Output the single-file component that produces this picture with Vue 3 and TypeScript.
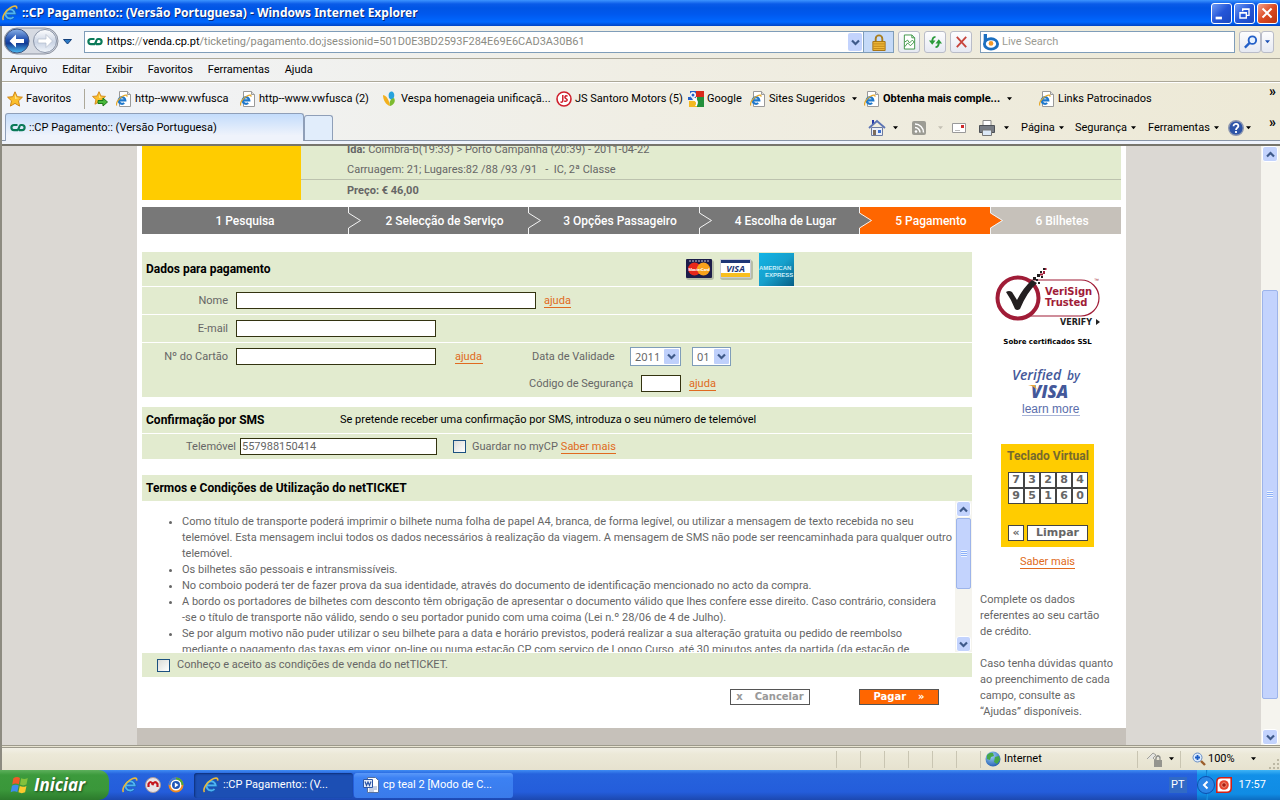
<script setup lang="ts">
import { ref } from 'vue'

interface Favourite {
  label: string
  icon: string
  menu?: boolean
  strong?: boolean
}

const menus: string[] = ['Arquivo', 'Editar', 'Exibir', 'Favoritos', 'Ferramentas', 'Ajuda']

const favourites: Favourite[] = [
  { label: 'http--www.vwfusca', icon: 'page' },
  { label: 'http--www.vwfusca (2)', icon: 'page' },
  { label: 'Vespa homenageia unificaçã...', icon: 'vespa' },
  { label: 'JS Santoro Motors (5)', icon: 'js' },
  { label: 'Google', icon: 'google' },
  { label: 'Sites Sugeridos', icon: 'page', menu: true },
  { label: 'Obtenha mais comple...', icon: 'page', menu: true, strong: true },
  { label: 'Links Patrocinados', icon: 'page' },
]

const steps: string[] = [
  '1 Pesquisa',
  '2 Selecção de Serviço',
  '3 Opções Passageiro',
  '4 Escolha de Lugar',
  '5 Pagamento',
  '6 Bilhetes',
]
const currentStep = 4

const terms: string[] = [
  'Como título de transporte poderá imprimir o bilhete numa folha de papel A4, branca, de forma legível, ou utilizar a mensagem de texto recebida no seu\ntelemóvel. Esta mensagem inclui todos os dados necessários à realização da viagem. A mensagem de SMS não pode ser reencaminhada para qualquer outro\ntelemóvel.',
  'Os bilhetes são pessoais e intransmissíveis.',
  'No comboio poderá ter de fazer prova da sua identidade, através do documento de identificação mencionado no acto da compra.',
  'A bordo os portadores de bilhetes com desconto têm obrigação de apresentar o documento válido que lhes confere esse direito. Caso contrário, considera\n-se o título de transporte não válido, sendo o seu portador punido com uma coima (Lei n.º 28/06 de 4 de Julho).',
  'Se por algum motivo não puder utilizar o seu bilhete para a data e horário previstos, poderá realizar a sua alteração gratuita ou pedido de reembolso\nmediante o pagamento das taxas em vigor, on-line ou numa estação CP com serviço de Longo Curso, até 30 minutos antes da partida (da estação de',
]

const keys: string[] = ['7', '3', '2', '8', '4', '9', '5', '1', '6', '0']

const name = ref('')
const email = ref('')
const card = ref('')
const code = ref('')
const year = ref('2011')
const month = ref('01')
const phone = ref('557988150414')
const saveCard = ref(false)
const accepted = ref(false)
const search = ref('')

function press(key: string): void {
  card.value += key
}
function eraseLast(): void {
  card.value = card.value.slice(0, -1)
}
function clearCard(): void {
  card.value = ''
}
</script>

<template>
  <div class="desktop">
    <svg class="symbols" aria-hidden="true">
      <defs>
        <linearGradient id="g-back" x1="0" y1="0" x2="0" y2="1">
          <stop offset="0" stop-color="#8fb4e8" /><stop offset=".45" stop-color="#1f4fb0" /><stop offset=".6" stop-color="#123c96" /><stop offset="1" stop-color="#4fc0f5" />
        </linearGradient>
        <linearGradient id="g-fwd" x1="0" y1="0" x2="0" y2="1">
          <stop offset="0" stop-color="#ffffff" /><stop offset=".55" stop-color="#c9d3e4" /><stop offset="1" stop-color="#f2f6fb" />
        </linearGradient>
        <linearGradient id="g-amex" x1="0" y1="0" x2="1" y2="1">
          <stop offset="0" stop-color="#12b4e6" /><stop offset=".5" stop-color="#16a0cc" /><stop offset="1" stop-color="#075f86" />
        </linearGradient>
        <radialGradient id="g-globe" cx=".4" cy=".3" r=".8">
          <stop offset="0" stop-color="#9fd2f7" /><stop offset="1" stop-color="#1a55ad" />
        </radialGradient>
      </defs>
      <symbol id="i-ie" viewBox="0 0 16 16">
        <path d="M4 8.400h8.700A4.600 4.600 0 1 0 11.500 12" fill="none" stroke="#1763b5" stroke-width="3.200" />
        <path d="M4 8.400h8.700A4.600 4.600 0 1 0 11.500 12" fill="none" stroke="#4fb4f2" stroke-width="1.800" />
        <path d="M1.500 15C-.6 12.400 3.500 5.600 8.500 2.600C12 .5 15.400.4 14.600 3.600" fill="none" stroke="#e9b93c" stroke-width="1.600" />
      </symbol>
      <symbol id="i-page" viewBox="0 0 16 16">
        <path d="M3.500.5h8l3 3v12h-11z" fill="#fff" stroke="#9a9a9a" />
        <path d="M11.500.5v3h3" fill="#ddd" stroke="#9a9a9a" />
        <path d="M3 9.400h6.300A3.300 3.300 0 1 0 8.200 12" fill="none" stroke="#1e78cc" stroke-width="2.200" />
        <path d="M.8 14.600C-.5 12 3 7 7 5c3-1.400 4.500-1 3.800.8" fill="none" stroke="#e5a92c" stroke-width="1.200" />
      </symbol>
      <symbol id="i-vespa" viewBox="0 0 16 16">
        <path d="M1 4c4 1 6 5 7 11C4 14 1 9 1 4z" fill="#f3b01d" />
        <path d="M7 7c-1-4 0-6.500 3-6.500 3 1 3 6 0 9z" fill="#27a3dd" />
        <path d="M8 15c-1-4 0-7 4-8 2 3 0 7-4 8z" fill="#7dbb2f" />
      </symbol>
      <symbol id="i-js" viewBox="0 0 16 16">
        <circle cx="8" cy="8" r="7" fill="#fff" stroke="#cf1f2c" stroke-width="1.600" />
        <path d="M6.800 4v5.500q0 2-2.300 1.600M11.500 5.200C9 4 8 6.600 10 7.600s1.500 3.400-1.800 2.400" fill="none" stroke="#cf1f2c" stroke-width="1.500" />
      </symbol>
      <symbol id="i-google" viewBox="0 0 16 16">
        <path d="M2 0h6v7H2z" fill="#2460c8" /><path d="M8 0h8v6H8z" fill="#d92a1c" />
        <path d="M9 6h7v10H9z" fill="#24903b" /><path d="M1 10h8v6H1z" fill="#f4b921" />
        <path d="M0 6h3l2 3H0z" fill="#2460c8" />
        <circle cx="5" cy="4" r="3" fill="#fff" /><circle cx="5" cy="4" r="1.500" fill="#2460c8" />
        <path d="M6 7q6 2 3 8H7q3-4-2-6z" fill="#fff" />
      </symbol>
      <symbol id="i-star" viewBox="0 0 16 16">
        <path d="M8 .8l2.200 4.900 5.200.5-3.900 3.600 1.100 5.300L8 12.400l-4.600 2.700 1.100-5.300L.6 6.200l5.200-.5z" fill="#fbbf2c" stroke="#cf8413" />
        <path d="M8 3l1.300 3.500 3 .4L8 8z" fill="#ffe58a" />
      </symbol>
      <symbol id="i-cp" viewBox="0 0 16 10">
        <path d="M7.500 2H4a2.600 2.600 0 0 0 0 5.200h3C9.500 7.200 8.500 2 11 2h1a2.600 2.600 0 0 1 0 5.200H9" fill="none" stroke="#0b7a58" stroke-width="2.200" />
      </symbol>
      <symbol id="i-down" viewBox="0 0 9 7">
        <path d="M1 1.500l3.500 3.500L8 1.500" fill="none" stroke="#3f5a8a" stroke-width="2.200" />
      </symbol>
      <symbol id="i-caret" viewBox="0 0 6 4"><path d="M0 0h6L3 3.500z" fill="currentColor" /></symbol>
      <symbol id="i-winflag" viewBox="0 0 18 18">
        <path d="M3 3q3-2 6-.4L8 8.400q-3-1.400-6 .2z" fill="#ef5a2a" />
        <path d="M10 3q3 1.400 6-.2l-1.200 5.800q-3 1.500-5.800 0z" fill="#82c13c" />
        <path d="M1.800 9.700q3-1.700 6-.2l-1.200 5.800q-3-1.500-6 .2z" fill="#3e8ded" />
        <path d="M8.800 9.900q3 1.500 6-.1l-1.200 5.800q-3 1.500-6 0z" fill="#fbc92e" />
      </symbol>
    </svg>

    <header class="titlebar">
      <svg class="i16"><use href="#i-ie" /></svg>
      <h1>::CP Pagamento:: (Versão Portuguesa) - Windows Internet Explorer</h1>
      <div class="winbuttons">
        <button type="button" aria-label="Minimizar"><svg viewBox="0 0 21 21"><path d="M4 14h7v3H4z" fill="#fff" /></svg></button>
        <button type="button" aria-label="Restaurar"><svg viewBox="0 0 21 21"><path d="M8.500 8V5.500h7v7H13M8 6h8M5.500 9.500h7v6h-7zM5 10h8" fill="none" stroke="#fff" stroke-width="1.500" /></svg></button>
        <button type="button" class="close" aria-label="Fechar"><svg viewBox="0 0 21 21"><path d="M5 5l10 10M15 5l-10 10" stroke="#fff" stroke-width="2.200" /></svg></button>
      </div>
    </header>

    <div class="window">
      <div class="chrome">
        <div class="navbar">
          <svg class="travel" viewBox="0 0 56 30" role="img" aria-label="Voltar e avançar">
            <path d="M13 1h28a13 13 0 0 1 0 26H13a13 13 0 0 1 0-26z" fill="#d6dae2" stroke="#8d93a0" />
            <circle cx="13" cy="14" r="12" fill="url(#g-back)" stroke="#3d5480" />
            <path d="M5.500 14l6.500-6.500v4.500h8v4h-8v4.500z" fill="#fff" />
            <circle cx="41" cy="14" r="11.500" fill="url(#g-fwd)" stroke="#8b95a8" />
            <path d="M48.500 14L42 7.500V12h-8v4h8v4.500z" fill="#fff" stroke="#b3bccb" stroke-width=".7" />
          </svg>
          <svg class="history" viewBox="0 0 9 6"><path d="M.5.5h8L4.500 5z" fill="#2a78c4" stroke="#14407c" /></svg>
          <div class="address">
            <svg class="cp"><use href="#i-cp" /></svg>
            <span class="url"><b>https:</b>//<b>venda.cp.pt</b>/ticketing/pagamento.do;jsessionid=501D0E3BD2593F284E69E6CAD3A30B61</span>
            <button type="button" class="drop" aria-label="Endereços"><svg><use href="#i-down" /></svg></button>
          </div>
          <div class="lock"><svg viewBox="0 0 14 18"><path d="M3.500 9V5a3.500 3.500 0 0 1 7 0v4" fill="none" stroke="#a87d1c" stroke-width="2" /><path d="M.5 8h13v9.500H.5z" fill="#f0b93a" stroke="#a36f10" /><path d="M1 10.500h12M1 13h12M1 15.500h12" stroke="#bf8418" /></svg></div>
          <button type="button" class="tool" aria-label="Compatibilidade"><svg viewBox="0 0 16 16"><path d="M2.500.5h8l3 3v12h-11z" fill="#fff" stroke="#3b9443" /><path d="M10.500.5v3h3M3 8l3-2 2 3 3-3 2 2M3 13l3-4 3 3 4-4" fill="none" stroke="#3b9443" /></svg></button>
          <button type="button" class="tool" aria-label="Atualizar"><svg viewBox="0 0 16 16"><path d="M8 2.500Q4.500 2.500 4.500 8M8 13.500q3.500 0 3.500-5.500" fill="none" stroke="#2a9a3a" stroke-width="2" /><path d="M1 6.500h7L4.500 11zM8 9.500h7L11.500 5z" fill="#2a9a3a" /></svg></button>
          <button type="button" class="tool" aria-label="Parar"><svg viewBox="0 0 16 16"><path d="M3 2.500l10 11M13 2.500l-10 11" stroke="#c8443c" stroke-width="2" /></svg></button>
          <label class="search">
            <svg viewBox="0 0 18 18"><path d="M3 0v9" stroke="#1b6fc0" stroke-width="3.500" /><ellipse cx="9" cy="10.500" rx="7" ry="5.500" fill="#fff" stroke="#1b6fc0" stroke-width="3" /><circle cx="9" cy="10" r="2.500" fill="#f2992a" /></svg>
            <input v-model="search" type="text" placeholder="Live Search" aria-label="Live Search" />
          </label>
          <div class="go">
            <button type="button" aria-label="Pesquisar"><svg viewBox="0 0 16 16"><circle cx="10" cy="6" r="4" fill="#e6f1ff" stroke="#2460c8" stroke-width="2" /><path d="M7 9l-5 5" stroke="#2460c8" stroke-width="2.500" /></svg></button>
            <button type="button" class="more" aria-label="Opções de pesquisa"><svg class="caret blue"><use href="#i-caret" /></svg></button>
          </div>
        </div>

        <nav class="menubar">
          <a v-for="item in menus" :key="item" href="#">{{ item }}</a>
        </nav>

        <div class="favbar">
          <a href="#" class="favhome"><svg class="i16"><use href="#i-star" /></svg>Favoritos</a>
          <button type="button" class="favadd" aria-label="Adicionar a Favoritos">
            <svg class="i16" viewBox="0 0 16 16"><use href="#i-star" width="14" height="14" /><path d="M6 9.500h5V7l4.500 4-4.500 4v-2.500H6z" fill="#48b83c" stroke="#1d7a1a" /></svg>
          </button>
          <div class="favlist">
            <a v-for="fav in favourites" :key="fav.label" href="#" :class="{ strong: fav.strong }">
              <svg class="i16"><use :href="'#i-' + fav.icon" /></svg>{{ fav.label }}<svg v-if="fav.menu" class="caret"><use href="#i-caret" /></svg>
            </a>
          </div>
          <span class="overflow">»</span>
        </div>

        <div class="tabbar">
          <a href="#" class="tab"><svg class="cp"><use href="#i-cp" /></svg>::CP Pagamento:: (Versão Portuguesa)</a>
          <button type="button" class="newtab" aria-label="Nova guia"></button>
          <div class="commands">
            <a href="#" class="cmd home" aria-label="Página inicial"><svg class="i18" viewBox="0 0 18 18"><path d="M4 1h2v4H4z" fill="#2438a8" /><path d="M3.500 8.500h11v8h-11z" fill="#e9eef8" stroke="#6d7ba0" /><path d="M1 9l8-7 8 7" fill="none" stroke="#5c74b4" stroke-width="1.800" /><path d="M5 11h3v5H5z" fill="#7d6c5c" /><path d="M10 11h3v3h-3z" fill="#3c6fcf" /></svg><svg class="caret"><use href="#i-caret" /></svg></a>
            <a href="#" class="cmd feed" aria-label="Feeds"><svg class="i14" viewBox="0 0 14 14"><rect width="14" height="14" rx="2" fill="#9c9c94" /><circle cx="4" cy="10.500" r="1.300" fill="#fff" /><path d="M3 6.500a5 5 0 0 1 5 5M3 3a8.500 8.500 0 0 1 8.500 8.500" fill="none" stroke="#fff" stroke-width="1.500" /></svg><svg class="caret dim"><use href="#i-caret" /></svg></a>
            <a href="#" class="cmd mail" aria-label="Ler email"><svg class="i14" viewBox="0 0 14 14"><path d="M.5 2.500h13v9H.5z" fill="#fff" stroke="#999" /><path d="M9 4h3v3H9z" fill="#cf2a2a" /><path d="M3 9.500h5" stroke="#bbb" /></svg></a>
            <a href="#" class="cmd print" aria-label="Imprimir"><svg class="i16" viewBox="0 0 16 16"><path d="M4 .5h8v6H4z" fill="#fff" stroke="#888" /><path d="M.5 5.500h15v7H.5z" fill="#777c84" stroke="#4d5157" /><path d="M3.500 10h9v5.500h-9z" fill="#dce9f7" stroke="#777" /></svg><svg class="caret"><use href="#i-caret" /></svg></a>
            <a href="#" class="cmd pagina">Página<svg class="caret"><use href="#i-caret" /></svg></a>
            <a href="#" class="cmd seguranca">Segurança<svg class="caret"><use href="#i-caret" /></svg></a>
            <a href="#" class="cmd ferramentas">Ferramentas<svg class="caret"><use href="#i-caret" /></svg></a>
            <a href="#" class="cmd help" aria-label="Ajuda"><svg class="i16" viewBox="0 0 16 16"><circle cx="8" cy="8" r="7.300" fill="#2e55a8" stroke="#8d97b0" stroke-width="1.400" /><path d="M5.500 6.200C5.700 2.800 11 3.400 10.300 6.500 10 7.800 8 8 8 10M8 11v2" fill="none" stroke="#fff" stroke-width="1.800" /></svg><svg class="caret"><use href="#i-caret" /></svg></a>
          </div>
          <span class="overflow">»</span>
        </div>
      </div>

      <div class="viewport">
        <div class="page">
          <main class="sheet">
            <section class="journey">
              <div class="swatch"></div>
              <div class="trip">
                <p><b>Ida:</b> Coimbra-b(19:33) &gt; Porto Campanha (20:39) - 2011-04-22</p>
                <p>Carruagem: 21; Lugares:82 /88 /93 /91 &nbsp; - &nbsp;IC, 2ª Classe</p>
                <p class="price">Preço: € 46,00</p>
              </div>
            </section>

            <ol class="steps">
              <li v-for="(step, i) in steps" :key="step" :class="{ current: i === currentStep, next: i > currentStep }">
                <svg v-if="i > 0" viewBox="0 0 13 27" :class="{ lit: i === currentStep + 1 }"><path class="tip" d="M0 0v6l12 7.500L0 21v6z" /><path d="M.5 0v6l12 7.500L.5 21v6" fill="none" stroke="#f4f4f4" /></svg>
                <span>{{ step }}</span>
              </li>
            </ol>

            <div class="columns">
              <form class="payment" @submit.prevent>
                <section class="panel">
                  <div class="line head">
                    <h2>Dados para pagamento</h2>
                    <div class="cards">
                      <svg class="card" viewBox="0 0 34 26" role="img" aria-label="MasterCard"><rect x="2" y="4" width="28" height="20" rx="3" fill="#8a9180" opacity=".5" /><rect x="2" y="3" width="26" height="19" rx="1" fill="#1c1d4a" /><path d="M5 5h21" stroke="#c9cbdc" stroke-dasharray="2 1" /><circle cx="10.500" cy="13" r="6.500" fill="#e8271b" /><circle cx="19.500" cy="13" r="6.500" fill="#f9a21b" /><text x="15" y="15" text-anchor="middle" class="mc">MasterCard</text></svg>
                      <svg class="card" viewBox="0 0 34 26" role="img" aria-label="Visa"><rect x="0" y="4" width="33" height="20" rx="3" fill="#8a9180" opacity=".5" /><rect x=".5" y="3.500" width="30" height="18" fill="#fff" stroke="#c8cbd4" /><path d="M1 4h29v3H1z" fill="#1d3576" /><path d="M1 17h29v4H1z" fill="#f8bf1f" /><text x="15.500" y="15.500" text-anchor="middle" class="visa">VISA</text></svg>
                      <svg class="amex" viewBox="0 0 35 33" role="img" aria-label="American Express"><path d="M0 0h35v33H0z" fill="url(#g-amex)" /><text x="0" y="17" class="ax">AMERICAN</text><text x="6" y="24" class="ax">EXPRESS</text></svg>
                    </div>
                  </div>
                  <div class="line">
                    <label class="caption" for="nome">Nome</label>
                    <input id="nome" v-model="name" class="field wide" type="text" />
                    <a href="#" class="help-link">ajuda</a>
                  </div>
                  <div class="line">
                    <label class="caption" for="email">E-mail</label>
                    <input id="email" v-model="email" class="field" type="text" />
                  </div>
                  <div class="line bare">
                    <label class="caption" for="cartao">Nº do Cartão</label>
                    <input id="cartao" v-model="card" class="field" type="text" />
                    <a href="#" class="help-link far">ajuda</a>
                    <label class="validity" for="ano">Data de Validade</label>
                    <span class="picker">
                      <select id="ano" v-model="year"><option>2011</option><option>2012</option><option>2013</option></select>
                      <svg><use href="#i-down" /></svg>
                    </span>
                    <span class="picker month">
                      <select v-model="month" aria-label="Mês"><option>01</option><option>02</option><option>03</option></select>
                      <svg><use href="#i-down" /></svg>
                    </span>
                  </div>
                  <div class="line bare">
                    <label class="security" for="codigo">Código de Segurança</label>
                    <input id="codigo" v-model="code" class="field tiny" type="text" />
                    <a href="#" class="help-link">ajuda</a>
                  </div>
                </section>

                <section class="panel sms">
                  <div class="line short">
                    <h2 class="sms-title">Confirmação por SMS</h2>
                    <p>Se pretende receber uma confirmação por SMS, introduza o seu número de telemóvel</p>
                  </div>
                  <div class="line phone">
                    <label class="caption" for="telemovel">Telemóvel</label>
                    <input id="telemovel" v-model="phone" class="field" type="text" />
                    <input id="guardar" v-model="saveCard" class="tick" type="checkbox" />
                    <label for="guardar">Guardar no myCP</label>
                    <a href="#" class="inline-link">Saber mais</a>
                  </div>
                </section>

                <section class="terms">
                  <h2>Termos e Condições de Utilização do netTICKET</h2>
                  <div class="termbox">
                    <ul><li v-for="term in terms" :key="term">{{ term }}</li></ul>
                    <div class="scroll small">
                      <button type="button" aria-label="Subir"><svg class="flip"><use href="#i-down" /></svg></button>
                      <div class="thumb"><i></i></div>
                      <div class="after"></div>
                      <button type="button" aria-label="Descer"><svg><use href="#i-down" /></svg></button>
                    </div>
                  </div>
                  <div class="accept">
                    <input id="aceito" v-model="accepted" class="tick" type="checkbox" />
                    <label for="aceito">Conheço e aceito as condições de venda do netTICKET.</label>
                  </div>
                </section>

                <div class="actions">
                  <button type="button" class="cancel"><span>x</span><span>Cancelar</span></button>
                  <button type="submit" class="pay"><span>Pagar</span><span>»</span></button>
                </div>
              </form>

              <aside class="side">
                <svg class="verisign" viewBox="0 0 110 64" role="img" aria-label="VeriSign Trusted">
                  <path d="M36 16h52a18 18 0 0 1 0 36H38" fill="none" stroke="#a01c37" stroke-width="1.200" />
                  <circle cx="25" cy="34" r="20.500" fill="#fff" stroke="#a01c37" stroke-width="4" />
                  <path d="M13 28q3-2 6 0l5 8q6-12 15-20l5 3q-10 9-17 26-3 2-5 0-4-10-9-17z" fill="#231f20" />
                  <path d="M40 13h3v3h-3zM44 10h3v3h-3zM43 15h2v2h-2zM47 7h2v2h-2zM50 4h3v2h-3zM48 12h2v2h-2zM45 18h2v2h-2z" fill="#231f20" />
                  <path d="M47 9.500h3v2h-3zM50 7h2v3h-2zM52 4h1.500v2H52z" fill="#a01c37" />
                  <text x="52" y="31" class="vs">VeriSign</text>
                  <text x="52" y="42" class="vs">Trusted</text>
                  <text x="101" y="18" class="tm">™</text>
                  <text x="67" y="61" class="vf">VERIFY</text>
                  <path d="M103 55l4 3-4 3z" fill="#222" />
                </svg>
                <a href="#" class="ssl">Sobre certificados SSL</a>
                <svg class="vbv" viewBox="0 0 72 52" role="img" aria-label="Verified by VISA">
                  <text x="0" y="13" class="vb">Verified</text><text x="55" y="13" class="vb by">by</text>
                  <text x="19" y="31" class="vb big">VISA</text>
                  <path d="M16 18h7l2 5q-3-4-9-5z" fill="#e9a93c" />
                  <text x="10" y="46" class="lm">learn more</text>
                  <path d="M10 48.500h58" stroke="#a9b5d8" />
                </svg>
                <div class="keypad">
                  <h3>Teclado Virtual</h3>
                  <div class="keys"><button v-for="key in keys" :key="key" type="button" @click="press(key)">{{ key }}</button></div>
                  <div class="edit"><button type="button" @click="eraseLast">«</button><button type="button" @click="clearCard">Limpar</button></div>
                </div>
                <a href="#" class="inline-link more-link">Saber mais</a>
                <p>Complete os dados<br />referentes ao seu cartão<br />de crédito.</p>
                <p>Caso tenha dúvidas quanto<br />ao preenchimento de cada<br />campo, consulte as<br />“Ajudas” disponíveis.</p>
              </aside>
            </div>
          </main>
          <footer class="pagefoot"></footer>
        </div>
        <div class="scroll big">
          <button type="button" aria-label="Subir"><svg class="flip"><use href="#i-down" /></svg></button>
          <div class="before"></div>
          <div class="thumb"><i></i></div>
          <div class="after"></div>
          <button type="button" aria-label="Descer"><svg><use href="#i-down" /></svg></button>
        </div>
      </div>

      <footer class="status">
        <div class="cells"><i v-for="n in 6" :key="n"></i></div>
        <div class="zone"><svg class="i16" viewBox="0 0 16 16"><circle cx="8" cy="8" r="7.500" fill="url(#g-globe)" /><path d="M2 4q3-3 6-2l1 3-3 1-1 3-3-1zM10 6l4-1 1 4-3 4-3-2z" fill="#46a848" /></svg>Internet</div>
        <div class="shield"><svg class="i18" viewBox="0 0 18 18"><path d="M1 9l6-6 3 2-3 3 2 2 3-5 2 3" fill="#e4e4e0" stroke="#a0a09a" /><path d="M8 10h8v7H8z" fill="#94948e" /><path d="M10 10V8a2 2 0 0 1 4 0v2" fill="none" stroke="#94948e" stroke-width="1.300" /></svg><svg class="caret"><use href="#i-caret" /></svg></div>
        <div class="zoomer"><svg class="i14" viewBox="0 0 14 14"><circle cx="5.500" cy="5.500" r="4.500" fill="#dbeafc" stroke="#6b8fc4" /><path d="M5.500 3v5M3 5.500h5" stroke="#1b5cc4" stroke-width="1.800" /><path d="M9 9l4 4" stroke="#9b5d2c" stroke-width="2.400" /></svg>100%<svg class="caret"><use href="#i-caret" /></svg></div>
        <svg class="grip" viewBox="0 0 12 12"><path d="M9 1h2v2H9zM9 5h2v2H9zM9 9h2v2H9zM5 5h2v2H5zM5 9h2v2H5zM1 9h2v2H1z" fill="#bcb8a4" /></svg>
      </footer>
    </div>

    <footer class="taskbar">
      <button type="button" class="start"><svg viewBox="0 0 18 18"><use href="#i-winflag" /></svg>Iniciar</button>
      <div class="quick">
        <svg class="i16"><use href="#i-ie" /></svg>
        <svg class="i16" viewBox="0 0 16 16"><circle cx="8" cy="8" r="7.500" fill="#e9e4e8" stroke="#a99" /><path d="M3.500 10V7q2-4 4 0v1q2-5 5-1v3" fill="none" stroke="#c4161f" stroke-width="2.200" /></svg>
        <svg class="i16" viewBox="0 0 16 16"><circle cx="8" cy="8" r="6.500" fill="#fff" stroke="#ee8a24" stroke-width="2" /><path d="M8 1.500A6.500 6.500 0 0 1 14.500 8" fill="none" stroke="#4aa83a" stroke-width="2" /><path d="M8 1.500A6.500 6.500 0 0 0 1.500 8" fill="none" stroke="#3a7ce0" stroke-width="2" /><circle cx="8" cy="8" r="4" fill="#1f56b8" /><path d="M6.800 5.500L10.500 8l-3.700 2.500z" fill="#fff" /></svg>
      </div>
      <button type="button" class="task active"><svg class="i16"><use href="#i-ie" /></svg>::CP Pagamento:: (V...</button>
      <button type="button" class="task"><svg class="i16" viewBox="0 0 16 16"><path d="M4.500.5h8l3 3v12h-11z" fill="#fff" stroke="#58719c" /><path d="M6 10h8M6 12h8M6 14h5" stroke="#8ba0c8" /><path d="M.5 2.500h9v8h-9z" fill="#e6eefb" stroke="#2d56a5" /><path d="M2 4.500l1.500 4L5 5l1.500 3.500 1.500-4" fill="none" stroke="#2d56a5" stroke-width="1.200" /></svg>cp teal 2 [Modo de C...</button>
      <span class="lang">PT</span>
      <div class="tray">
        <svg class="hide" viewBox="0 0 18 18"><circle cx="9" cy="9" r="8.500" fill="#2a86e6" stroke="#0d4fae" /><path d="M10.500 5.500L7 9l3.500 3.500" fill="none" stroke="#fff" stroke-width="2" /></svg>
        <svg class="i16" viewBox="0 0 16 16"><path d="M5 .8h10.200V11q0 4.200-4.200 4.200H.8V5Q.8.8 5 .8z" fill="#fff" stroke="#d32014" stroke-width="1.600" /><circle cx="8" cy="8" r="4.800" fill="#e5452c" /><circle cx="8" cy="8" r="2.300" fill="#a81d10" stroke="#ffb59a" stroke-width=".7" /></svg>
        <time>17:57</time>
      </div>
    </footer>
  </div>
</template>

<style>
body {
  margin: 0;
}
</style>

<style scoped>
* {
  box-sizing: border-box;
}
.desktop {
  --ui: Roboto, 'Liberation Sans', sans-serif;
  --text: Roboto, 'Noto Sans', sans-serif;
  display: flex;
  flex-direction: column;
  height: 100vh;
  overflow: hidden;
  font: 11px/16px var(--ui);
  color: #000;
  background: #ece9d8;
}
h1, h2, h3, p, ul, ol {
  margin: 0;
  padding: 0;
}
a {
  color: inherit;
  text-decoration: none;
}
button {
  font: inherit;
  color: inherit;
  margin: 0;
  padding: 0;
  border: 0;
  background: none;
}
label { white-space: nowrap; }
svg {
  display: block;
  flex: none;
}
.symbols {
  position: absolute;
  width: 0;
  height: 0;
}
.i14 { width: 14px; height: 14px; }
.i16 { width: 16px; height: 16px; }
.i18 { width: 18px; height: 18px; }
.cp { width: 16px; height: 10px; }
.caret { width: 5px; height: 4px; color: #000; }
.caret.dim { color: #c4c1b4; }
.caret.blue { color: #1c50b4; }

/* title bar */
.titlebar {
  flex: none;
  display: flex;
  align-items: center;
  gap: 4px;
  height: 26px;
  padding: 0 2px;
  background: linear-gradient(#3d95ff 0, #0a5be8 4px, #0055e5 8px, #0058ee 14px, #0068ff 22px, #0044c4 26px);
}
.titlebar h1 {
  flex: 1;
  font: bold 12px/20px 'Noto Sans', sans-serif;
  color: #fff;
  text-shadow: 1px 1px 0 #0a2a78;
}
.winbuttons {
  display: flex;
  gap: 2px;
}
.winbuttons button {
  width: 21px;
  height: 21px;
  border: 1px solid #fff;
  border-radius: 3px;
  background: linear-gradient(135deg, #6f9bf5, #2456d8 50%, #1b48c0);
}
.winbuttons .close {
  background: linear-gradient(135deg, #f3a08c, #dc4a22 50%, #b93412);
}

/* window frame and toolbars */
.window {
  flex: 1;
  min-height: 0;
  display: flex;
  flex-direction: column;
  border-left: 2px solid #8d8b80;
}
.chrome {
  flex: none;
  background: linear-gradient(90deg, #f1f4fa, #f0eee4 50%, #ede9d6);
  border-bottom: 2px solid #77756c;
}
.navbar {
  display: flex;
  align-items: center;
  height: 33px;
  padding: 0 6px 0 2px;
  border-bottom: 1px solid #aca899;
}
.travel { width: 56px; height: 30px; }
.history { width: 9px; height: 6px; margin: 0 12px 0 3px; }
.address {
  flex: 1;
  display: flex;
  align-items: center;
  height: 22px;
  padding: 0 1px 0 2px;
  border: 1px solid #7f9db9;
  background: #fff;
}
.url {
  flex: 1;
  min-width: 0;
  overflow: hidden;
  margin-left: 4px;
  white-space: nowrap;
  color: #8c8c84;
}
.url b {
  font-weight: 400;
  color: #000;
}
.drop {
  display: grid;
  place-items: center;
  width: 14px;
  height: 18px;
  border-radius: 2px;
  background: #c3d3fd;
}
.drop svg, .scroll svg, .picker svg { width: 9px; height: 7px; }
.lock {
  display: grid;
  place-items: center;
  width: 30px;
  height: 22px;
  margin-right: 4px;
  border: 1px solid #7f9db9;
  border-left: 0;
  background: #c5daf8;
}
.lock svg { width: 14px; height: 17px; }
.tool, .go button {
  display: grid;
  place-items: center;
  width: 22px;
  height: 22px;
  border: 1px solid #b9bcc8;
  border-radius: 3px;
  background: linear-gradient(#fdfdfe, #e6e9f2);
}
.tool { margin-right: 4px; }
.tool svg, .go button svg:not(.caret) { width: 15px; height: 16px; }
.search {
  display: flex;
  align-items: center;
  width: 255px;
  height: 22px;
  margin: 0 4px;
  padding-left: 1px;
  border: 1px solid #7f9db9;
  background: #fff;
}
.search svg { width: 18px; height: 17px; }
.search input {
  flex: 1;
  min-width: 0;
  margin-left: 2px;
  padding: 0;
  border: 0;
  outline: 0;
  background: none;
  font: inherit;
}
.search input::placeholder { color: #9c9c94; }
.go { display: flex; }
.go .more { width: 13px; }
.menubar {
  display: flex;
  align-items: center;
  gap: 15px;
  height: 23px;
  padding-left: 8px;
  border-bottom: 1px solid #aca899;
}
.favbar {
  display: flex;
  align-items: center;
  height: 32px;
  padding: 0 4px 0 5px;
  border-top: 1px solid #fff;
  white-space: nowrap;
}
.favhome {
  display: flex;
  align-items: center;
  gap: 3px;
  width: 78px;
  height: 20px;
  border-right: 1px solid #aca899;
}
.favadd { margin: 0 8px 0 7px; }
.favlist {
  flex: 1;
  display: grid;
  grid-template-columns: 124px 142px 174px 132px 62px 114px 175px auto;
}
.favlist a {
  display: flex;
  align-items: center;
  gap: 3px;
}
.favlist .caret { margin-left: 4px; }
.favlist .strong { font-weight: bold; }
.overflow {
  align-self: flex-start;
  font-weight: bold;
  font-size: 14px;
}
.tabbar {
  display: flex;
  align-items: flex-end;
  height: 30px;
  padding: 0 4px 3px 3px;
  background: linear-gradient(transparent 26px, #8a96a8 26px, #8a96a8 27px, #eff3fb 27px);
  white-space: nowrap;
}
.tab {
  display: flex;
  align-items: center;
  gap: 3px;
  width: 299px;
  height: 28px;
  padding-left: 4px;
  border: 1px solid #8f9fb8;
  border-bottom: 0;
  border-radius: 3px 3px 0 0;
  background: linear-gradient(#c3dcfb, #eff3fb 80%);
}
.newtab {
  width: 29px;
  height: 25px;
  margin-bottom: 1px;
  border: 1px solid #8f9fb8;
  border-bottom: 0;
  border-radius: 3px 3px 0 0;
  background: #e1edfb;
}
.commands {
  flex: 1;
  display: flex;
  justify-content: flex-end;
  align-self: center;
  padding-right: 3px;
}
.cmd {
  display: flex;
  align-items: center;
  gap: 4px;
}
.home { width: 44px; gap: 7px; }
.feed { width: 40px; gap: 12px; }
.mail { width: 27px; }
.print { width: 42px; gap: 9px; }
.pagina { width: 54px; }
.seguranca { width: 73px; }
.ferramentas { width: 80px; }
.help { width: 38px; gap: 2px; }

/* page */
.viewport {
  flex: 1;
  min-height: 0;
  display: flex;
  background: #dbd8d3;
}
.page {
  flex: 1;
  min-width: 0;
  overflow: hidden;
  font: 11px/16px var(--text);
  color: #666;
}
.sheet, .pagefoot {
  width: 989px;
  max-width: 100%;
  margin: 0 auto;
}
.sheet {
  padding: 0 5px 8px;
  background: #fff;
}
.pagefoot {
  height: 40px;
  background: #c6c1ba;
}
.journey {
  display: flex;
  background: #e2ebcf;
}
.swatch {
  width: 159px;
  background: #fc0;
}
.trip {
  flex: 1;
  height: 54px;
}
.trip p {
  height: 20px;
  padding-left: 46px;
  line-height: 22px;
}
.trip p:first-child { margin-top: -7px; }
.trip .price {
  border-top: 1px solid #bcc2ae;
  font-weight: bold;
}
.steps {
  display: grid;
  grid-template-columns: 206fr 180fr 171fr 160fr 131fr 131fr;
  margin-top: 7px;
  list-style: none;
  font-size: 12px;
  font-weight: 500;
  color: #fff;
}
.steps li {
  display: flex;
  align-items: center;
  height: 27px;
  background: #787878;
}
.steps span {
  flex: 1;
  text-align: center;
}
.steps svg { width: 13px; height: 27px; }
.steps .tip { fill: #787878; }
.steps .lit .tip { fill: #f60; }
.steps .current { background: #f60; }
.steps .next { background: #c6c1ba; }
.columns {
  display: flex;
  margin-top: 18px;
}
.payment {
  flex: 1;
  min-width: 0;
}
.panel, .terms h2, .accept { background: #e2ebcf; }
h2 {
  font-size: 12px;
  line-height: 16px;
  font-weight: bold;
  color: #000;
}
.line {
  display: flex;
  align-items: center;
  height: 28px;
  border-bottom: 1px solid #fff;
}
.head {
  height: 35px;
  padding-left: 4px;
}
.bare {
  height: 27px;
  border: 0;
}
.cards {
  display: flex;
  align-items: center;
  margin-left: auto;
  padding-right: 178px;
}
.card { width: 34px; height: 26px; margin-right: 2px; }
.amex { width: 35px; height: 33px; margin-left: 3px; }
.mc { font: bold 4px var(--text); fill: #fff; }
.visa { font: italic bold 9px 'Open Sans', sans-serif; fill: #1d3576; }
.ax { font: bold 6px 'Liberation Sans', sans-serif; fill: #c9edf9; }
.caption {
  width: 86px;
  margin-right: 8px;
  text-align: right;
}
.field {
  width: 200px;
  height: 17px;
  padding: 0 1px;
  border: 1px solid #333310;
  background: #fff;
  font: 11px/15px var(--text);
  color: #666;
}
.wide { width: 300px; }
.tiny { width: 40px; }
.help-link, .inline-link {
  line-height: 13px;
  color: #e06a20;
  border-bottom: 1px solid #e06a20;
}
.help-link { margin-left: 8px; }
.far { width: 28px; margin-left: 19px; }
.validity { width: 84px; margin: 0 14px 0 49px; }
.security { width: 104px; margin: 0 8px 0 387px; }
.picker {
  position: relative;
  width: 51px;
  height: 19px;
}
.month { width: 39px; margin-left: 11px; }
.picker select {
  appearance: none;
  width: 100%;
  height: 19px;
  padding: 0 0 0 4px;
  border: 1px solid #7f9db9;
  border-radius: 0;
  background: #fff;
  font: 11px/16px 'Noto Sans', sans-serif;
  color: #666;
}
.picker svg {
  position: absolute;
  top: 2px;
  right: 2px;
  width: 15px;
  height: 15px;
  padding: 4px 3px;
  border-radius: 1px;
  background: #bfd0fb;
  pointer-events: none;
}
.sms { margin-top: 10px; }
.short {
  height: 27px;
  padding-left: 4px;
}
.sms-title { width: 194px; }
.short p { color: #000; }
.phone {
  height: 25px;
  border: 0;
}
.phone .caption { width: 94px; margin-right: 4px; }
.phone .field { width: 197px; }
.tick {
  appearance: none;
  flex: none;
  width: 13px;
  height: 13px;
  margin: 0 7px 0 15px;
  border: 1px solid #1c5180;
  background: linear-gradient(135deg, #dcdcd7, #fff);
}
.phone .tick { margin: 0 6px 0 16px; }
.phone .inline-link { margin-left: 3px; }
.terms { margin-top: 16px; }
.terms h2 { padding: 5px 4px; }
.termbox {
  display: flex;
  height: 152px;
  padding-bottom: 1px;
}
.termbox ul {
  flex: 1;
  min-width: 0;
  overflow: hidden;
  padding: 13px 0 0 40px;
  white-space: pre;
}
.accept {
  display: flex;
  align-items: center;
  height: 24px;
}
.actions {
  display: flex;
  justify-content: flex-end;
  gap: 49px;
  padding: 12px 33px 0 0;
}
.actions button {
  display: flex;
  justify-content: center;
  gap: 12px;
  width: 80px;
  height: 16px;
  border: 1px solid #555;
  font: bold 10px/14px 'DejaVu Sans', sans-serif;
}
.cancel { background: #fff; color: #999; }
.pay { background: #f60; color: #fff; }

/* side column */
.side {
  display: flex;
  flex-direction: column;
  align-items: center;
  width: 149px;
  padding: 12px 0 0 2px;
}
.verisign { width: 110px; height: 64px; }
.vs { font: bold 10px 'DejaVu Sans', sans-serif; fill: #a01c37; }
.vf { font: bold 8px 'DejaVu Sans', sans-serif; fill: #222; }
.tm { font: 5px sans-serif; fill: #a01c37; }
.ssl {
  margin-top: 6px;
  font: bold 7px/16px 'DejaVu Sans', sans-serif;
  color: #000;
}
.vbv { width: 72px; height: 52px; margin-top: 17px; }
.vb { font: italic 600 14px 'Open Sans', sans-serif; fill: #44589a; }
.by { font-size: 12px; }
.big { font-weight: 800; font-size: 17px; }
.lm { font: 12px 'Liberation Sans', sans-serif; fill: #5a6dab; }
.keypad {
  width: 93px;
  margin-top: 25px;
  padding: 4px 6px 6px 7px;
  background: #fc0;
}
.keypad h3 {
  margin: 0 -6px 8px;
  text-align: center;
  font-size: 12px;
  line-height: 16px;
  color: #776a2e;
}
.keys {
  display: grid;
  grid-template-columns: repeat(5, 1fr);
}
.keypad button {
  height: 16px;
  border: 1px solid #444;
  background: #fff;
  font: bold 11px/14px 'DejaVu Sans', sans-serif;
  color: #666;
}
.edit {
  display: grid;
  grid-template-columns: 16px 1fr;
  gap: 3px;
  margin-top: 21px;
}
.more-link { margin: 8px 0 23px; }
.side p {
  align-self: stretch;
  margin-bottom: 16px;
  padding-left: 6px;
  white-space: nowrap;
}
.side p:last-child { margin-bottom: 0; }

/* scroll bars */
.scroll {
  flex: none;
  display: flex;
  flex-direction: column;
  width: 17px;
  padding: 0 1px;
  background: #f5f4ee;
}
.scroll button {
  display: grid;
  place-items: center;
  height: 16px;
  border: 1px solid #fff;
  border-radius: 3px;
  background: #c3d3fd;
}
.flip { transform: rotate(180deg); }
.thumb {
  display: grid;
  place-items: center;
  border: 1px solid #9db4ea;
  border-radius: 2px;
  background: #c3d3fd;
}
.thumb i {
  width: 6px;
  height: 7px;
  background: repeating-linear-gradient(#eef4fe 0 1px, #8cb0f8 1px 2px);
}
.big {
  width: 19px;
  padding: 0 2px 0 1px;
}
.big .before { flex: 128; }
.big .thumb { flex: 408; }
.big .after { flex: 30; }
.small .thumb { flex: 70; margin-top: 1px; }
.small .after { flex: 47; }

/* status bar */
.status {
  flex: none;
  display: flex;
  align-items: center;
  height: 25px;
  border-top: 3px double #9d9a8c;
  background: linear-gradient(#f2f0e6, #ece9d8 6px, #e6e2cf);
}
.cells {
  flex: 1;
  display: flex;
  justify-content: flex-end;
}
.cells i {
  width: 24px;
  height: 17px;
  border-left: 1px solid #c9c5b2;
}
.zone, .shield, .zoomer {
  display: flex;
  align-items: center;
  height: 17px;
  border-left: 1px solid #c9c5b2;
}
.zone { width: 157px; padding-left: 4px; gap: 3px; }
.shield { width: 43px; padding-left: 8px; gap: 5px; }
.zoomer { width: 88px; padding-left: 11px; gap: 2px; }
.zoomer .caret { margin-left: auto; margin-right: 12px; }
.grip { width: 12px; height: 12px; align-self: flex-end; }

/* task bar */
.taskbar {
  flex: none;
  display: flex;
  align-items: center;
  height: 30px;
  color: #fff;
  background: linear-gradient(#3f8cf3 0, #2663dd 4px, #245ddb 22px, #1c48b0 30px);
}
.start {
  display: flex;
  align-items: center;
  gap: 4px;
  width: 109px;
  height: 30px;
  padding-left: 10px;
  border-radius: 0 10px 10px 0;
  background: linear-gradient(#5db05c 0, #3c9a3c 5px, #3a973a 20px, #2c7a2c 30px);
  font: italic bold 17px/26px 'Open Sans', sans-serif;
  text-shadow: 1px 1px 2px #1c4a1c;
}
.start svg { width: 20px; height: 20px; }
.quick {
  display: flex;
  gap: 7px;
  width: 85px;
  padding-left: 13px;
}
.task {
  display: flex;
  align-items: center;
  gap: 4px;
  width: 159px;
  height: 25px;
  margin-right: 1px;
  padding-left: 9px;
  border-radius: 3px;
  background: linear-gradient(#5a98f9, #3c81f3 5px, #3a7bea);
}
.task.active {
  background: #1c4fb4;
  box-shadow: inset 1px 1px 2px #0d2f78;
}
.lang {
  margin-left: auto;
  margin-right: 10px;
  padding: 0 2px;
  background: #316ac5;
}
.tray {
  display: flex;
  align-items: center;
  gap: 1px;
  height: 30px;
  padding-right: 14px;
  background: linear-gradient(90deg, transparent 9px, #0d5fb8 9px, #18a3ee 10px, transparent 11px), linear-gradient(#3fb4f6 0, #1290e8 5px, #108ce4 24px, #0c6cc0 30px);
}
.hide { width: 18px; height: 18px; }
.tray time { margin-left: 6px; }
</style>
